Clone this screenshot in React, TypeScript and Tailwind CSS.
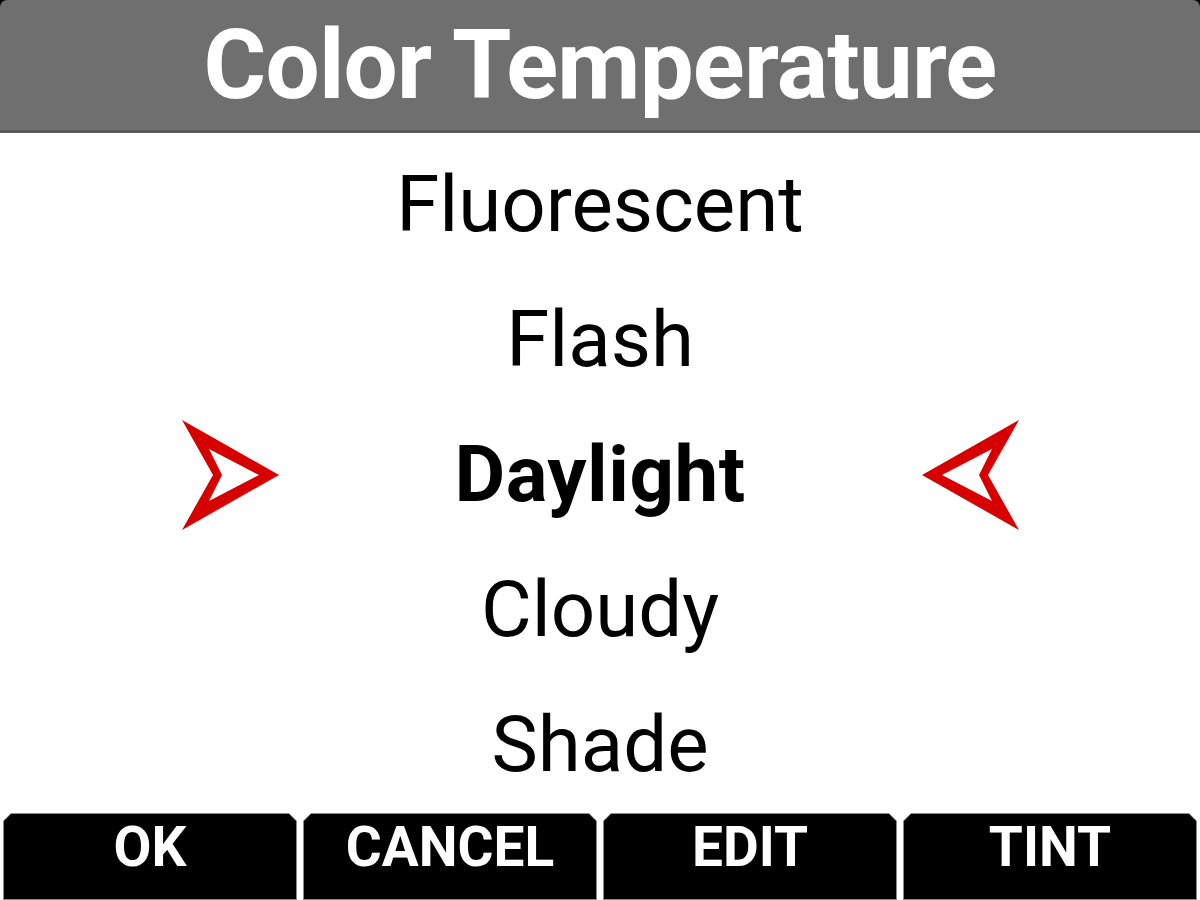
const items = ['Fluorescent', 'Flash', 'Daylight', 'Cloudy', 'Shade'];
const selected = 'Daylight';
const buttons = ['OK', 'CANCEL', 'EDIT', 'TINT'];

function PointerArrow({ flip }: { flip?: boolean }) {
  return (
    <svg
      width="98"
      height="112"
      viewBox="0 0 98 112"
      className={flip ? '-scale-x-100' : ''}
    >
      <path
        fillRule="evenodd"
        fill="#d60000"
        d="M0 1 L97 56 L0 111 L31 56 Z M27 30 L40 56 L27 82 L77 56 Z"
      />
    </svg>
  );
}

export default function App() {
  return (
    <div className="w-[1200px] h-[900px] bg-white flex flex-col font-['Roboto',sans-serif] overflow-hidden">
      {/* Title bar */}
      <div className="bg-black">
        <div className="h-[133px] bg-[#6f6f6f] border-b-[3px] border-[#5a5a5a] rounded-t-[7px] flex justify-center">
          <h1 className="text-white font-bold text-[96px] leading-[130px] tracking-[-0.8px]">
            Color Temperature
          </h1>
        </div>
      </div>

      {/* Option list */}
      <div className="pt-[4px] flex flex-col">
        {items.map((item) => {
          const active = item === selected;
          return (
            <div key={item} className="h-[135px] flex items-center justify-center">
              {active && <PointerArrow />}
              <div
                className={`text-center text-black text-[78px] leading-[135px] ${
                  active ? 'w-[641px] font-bold tracking-[0.5px]' : ''
                }`}
              >
                {item}
              </div>
              {active && <PointerArrow flip />}
            </div>
          );
        })}
      </div>

      {/* Soft key bar */}
      <div className="mt-auto h-[87px] flex gap-[6px] px-[3px]">
        {buttons.map((label) => (
          <div
            key={label}
            className="flex-1 bg-[#8a8a8a] p-px [clip-path:polygon(8px_0,calc(100%-8px)_0,100%_8px,100%_100%,0_100%,0_8px)]"
          >
            <div className="h-full bg-black flex justify-center pt-[6px] [clip-path:polygon(7px_0,calc(100%-7px)_0,100%_7px,100%_100%,0_100%,0_7px)]">
              <span className="text-white font-bold text-[55px] leading-none">
                {label}
              </span>
            </div>
          </div>
        ))}
      </div>
    </div>
  );
}
